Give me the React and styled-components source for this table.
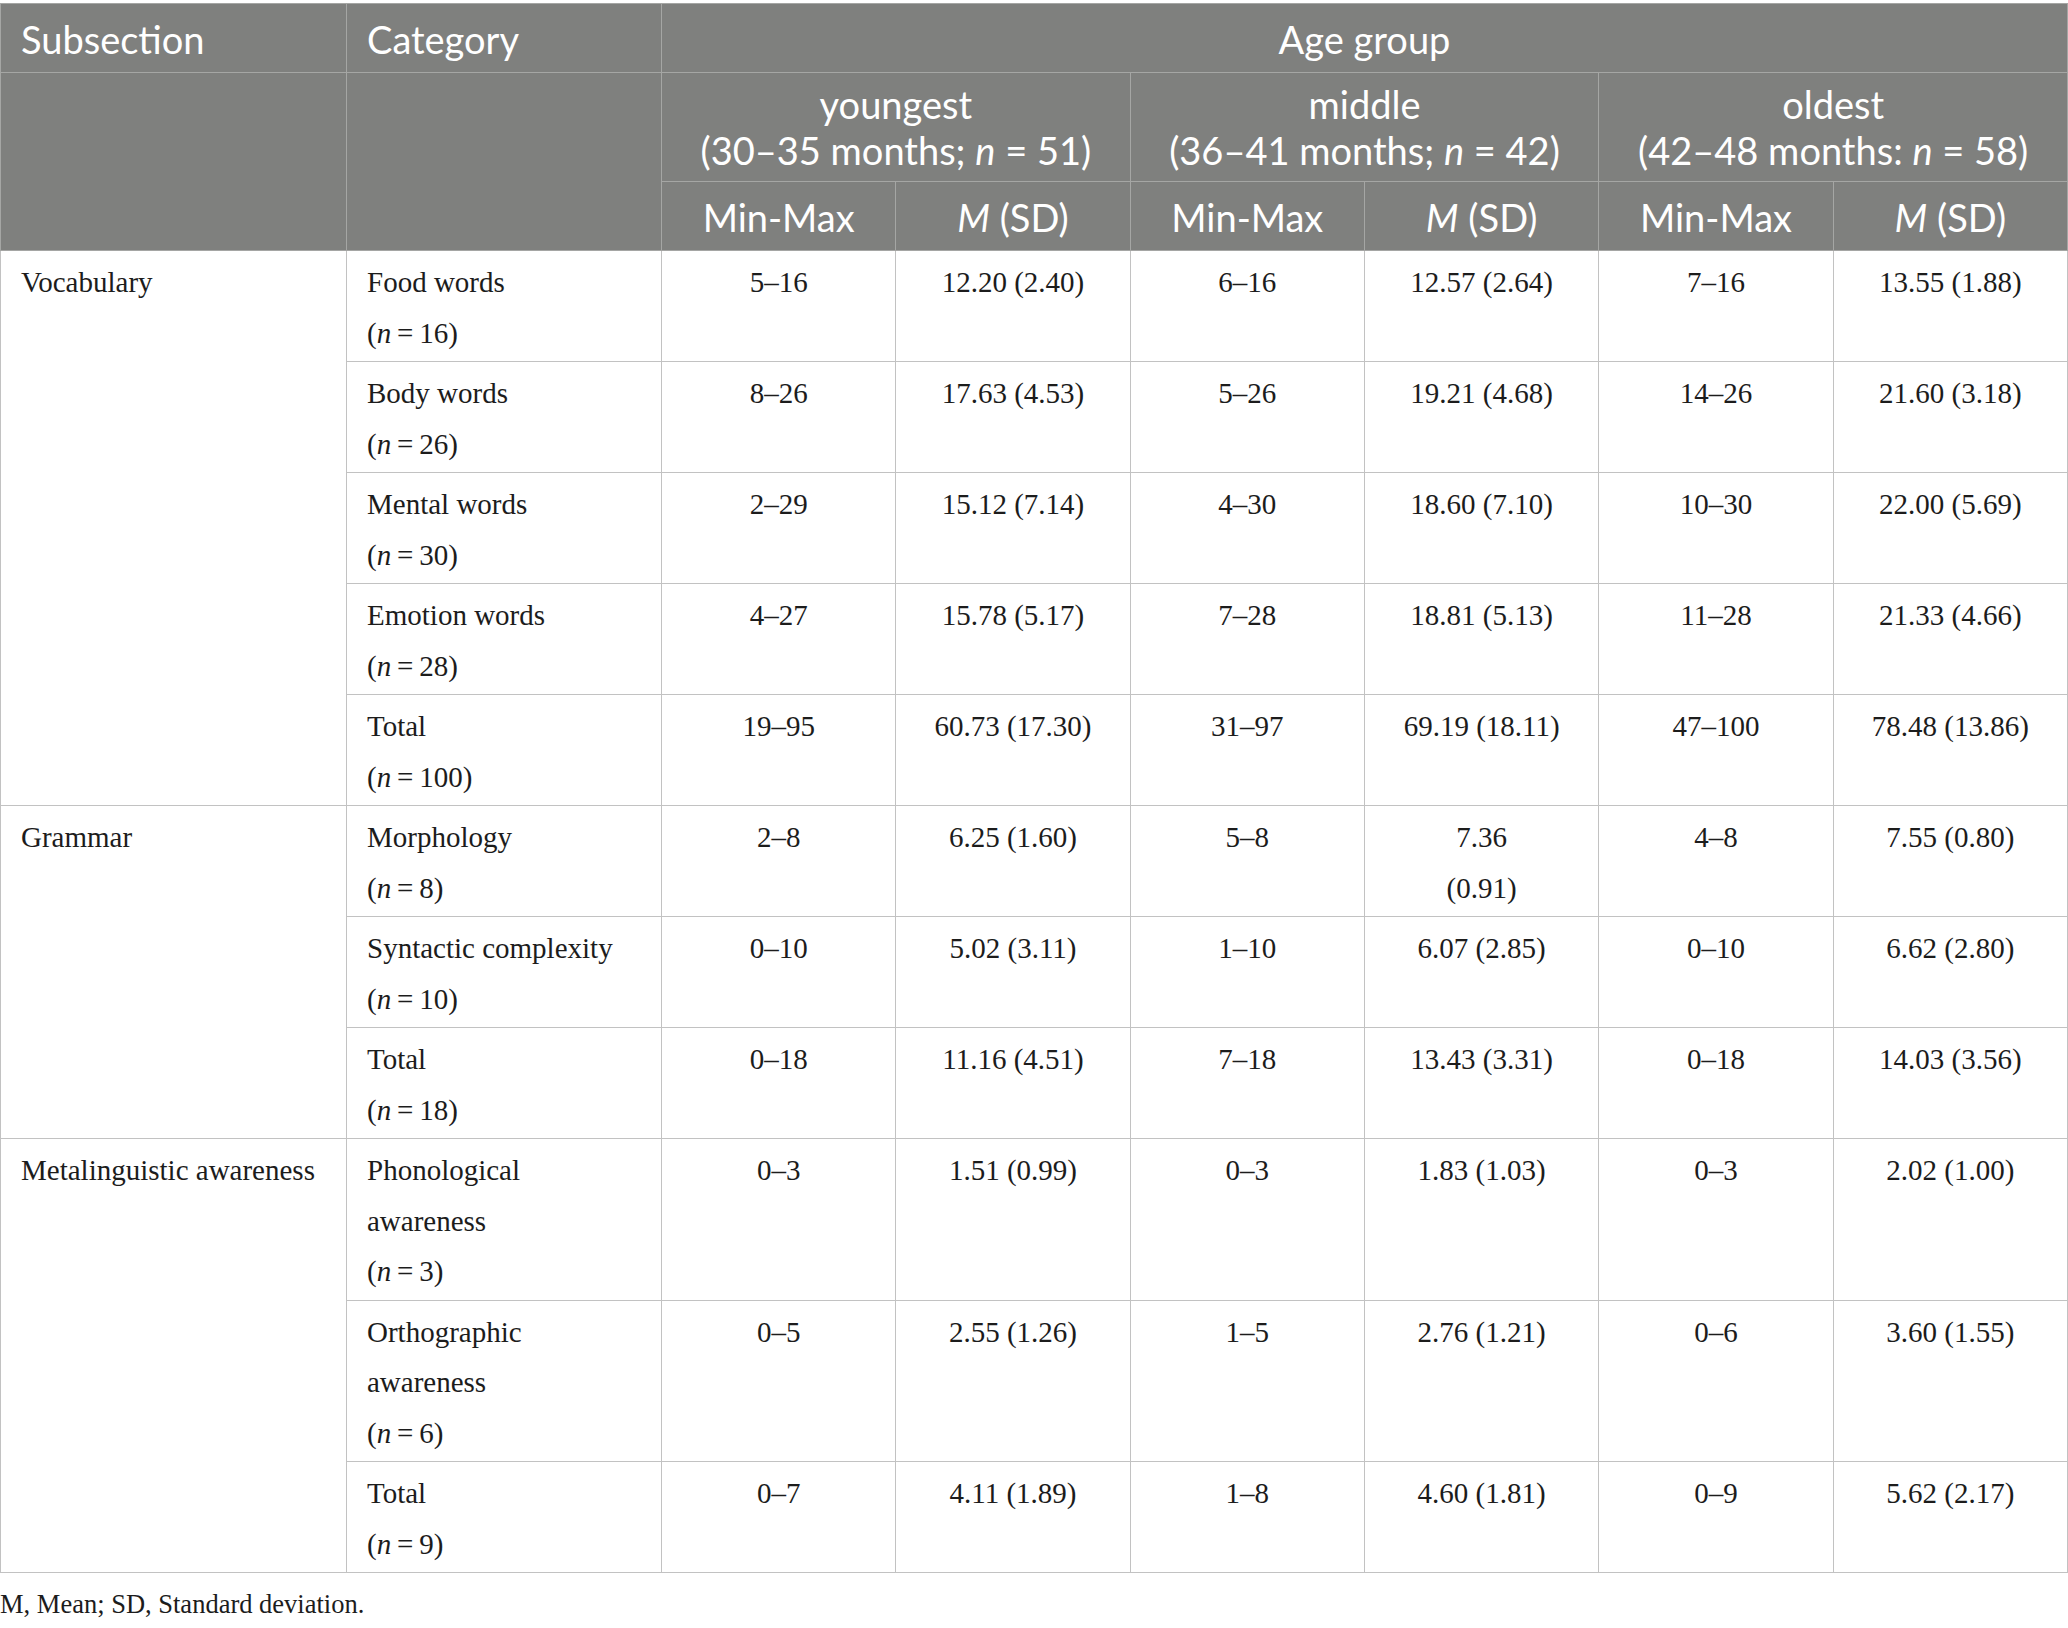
import React from 'react'
import styled, { createGlobalStyle } from 'styled-components';

const Global = createGlobalStyle`
body {
  margin: 0;
  background: #ffffff;
}
`

const Page = styled.div`
padding-top: 3px;
width: 2068px;
`

const Table = styled.table`
width: 2068px;
border-collapse: collapse;
table-layout: fixed;
border: 1px solid #c2c2c2;
`

const HeadCell = styled.th`
background: #7f807e;
color: #ffffff;
font-family: Lato, 'Noto Sans', sans-serif;
font-weight: 400;
font-size: 38px;
line-height: ${p => p.$tall ? '46px' : '51px'};
text-align: ${p => p.$left ? 'left' : 'center'};
vertical-align: top;
padding: ${p => p.$tall ? '8px 20px 8px' : '10px 20px 7px'};
border: 1px solid #a5a6a4;
`

const Cell = styled.td`
font-family: 'Liberation Serif', 'Times New Roman', serif;
font-size: 29px;
line-height: 50.5px;
color: #1c1c1c;
text-align: ${p => p.$left ? 'left' : 'center'};
vertical-align: top;
padding: 6px 20px 3px;
border: 1px solid #c2c2c2;
`

const Line = styled.div`
white-space: nowrap;
`

const Note = styled.p`
margin: 16px 0 0;
font-family: 'Liberation Serif', 'Times New Roman', serif;
font-size: 26.5px;
color: #1c1c1c;
`

const N = ({ v }) => <Line>(<i>n</i>{'\u2009=\u2009'}{v})</Line>

const sections = [
    { name: 'Vocabulary', rows: [
        { cat: ['Food words'], n: 16, vals: ['5–16', '12.20 (2.40)', '6–16', '12.57 (2.64)', '7–16', '13.55 (1.88)'] },
        { cat: ['Body words'], n: 26, vals: ['8–26', '17.63 (4.53)', '5–26', '19.21 (4.68)', '14–26', '21.60 (3.18)'] },
        { cat: ['Mental words'], n: 30, vals: ['2–29', '15.12 (7.14)', '4–30', '18.60 (7.10)', '10–30', '22.00 (5.69)'] },
        { cat: ['Emotion words'], n: 28, vals: ['4–27', '15.78 (5.17)', '7–28', '18.81 (5.13)', '11–28', '21.33 (4.66)'] },
        { cat: ['Total'], n: 100, vals: ['19–95', '60.73 (17.30)', '31–97', '69.19 (18.11)', '47–100', '78.48 (13.86)'] },
    ]},
    { name: 'Grammar', rows: [
        { cat: ['Morphology'], n: 8, vals: ['2–8', '6.25 (1.60)', '5–8', ['7.36', '(0.91)'], '4–8', '7.55 (0.80)'] },
        { cat: ['Syntactic complexity'], n: 10, vals: ['0–10', '5.02 (3.11)', '1–10', '6.07 (2.85)', '0–10', '6.62 (2.80)'] },
        { cat: ['Total'], n: 18, vals: ['0–18', '11.16 (4.51)', '7–18', '13.43 (3.31)', '0–18', '14.03 (3.56)'] },
    ]},
    { name: 'Metalinguistic awareness', rows: [
        { cat: ['Phonological', 'awareness'], n: 3, vals: ['0–3', '1.51 (0.99)', '0–3', '1.83 (1.03)', '0–3', '2.02 (1.00)'] },
        { cat: ['Orthographic', 'awareness'], n: 6, vals: ['0–5', '2.55 (1.26)', '1–5', '2.76 (1.21)', '0–6', '3.60 (1.55)'] },
        { cat: ['Total'], n: 9, vals: ['0–7', '4.11 (1.89)', '1–8', '4.60 (1.81)', '0–9', '5.62 (2.17)'] },
    ]},
]

const groups = [
    { name: 'youngest', range: '(30–35 months; ', n: 51 },
    { name: 'middle', range: '(36–41 months; ', n: 42 },
    { name: 'oldest', range: '(42–48 months: ', n: 58 },
]

function App() {
    return (
        <Page>
            <Global />
            <Table>
                <colgroup>
                    <col style={{ width: 346 }} />
                    <col style={{ width: 315 }} />
                    <col /><col /><col /><col /><col /><col />
                </colgroup>
                <thead>
                    <tr>
                        <HeadCell $left>Subsection</HeadCell>
                        <HeadCell $left>Category</HeadCell>
                        <HeadCell colSpan={6}>Age group</HeadCell>
                    </tr>
                    <tr>
                        <HeadCell rowSpan={2} />
                        <HeadCell rowSpan={2} />
                        {groups.map(g => (
                            <HeadCell key={g.name} colSpan={2} $tall>
                                <Line>{g.name}</Line>
                                <Line>{g.range}<i>n</i> = {g.n})</Line>
                            </HeadCell>
                        ))}
                    </tr>
                    <tr>
                        {groups.map(g => (
                            <React.Fragment key={g.name}>
                                <HeadCell>Min-Max</HeadCell>
                                <HeadCell><i>M</i> (SD)</HeadCell>
                            </React.Fragment>
                        ))}
                    </tr>
                </thead>
                <tbody>
                    {sections.map(sec => sec.rows.map((row, i) => (
                        <tr key={sec.name + i}>
                            {i === 0 && <Cell $left rowSpan={sec.rows.length}>{sec.name}</Cell>}
                            <Cell $left>
                                {row.cat.map(c => <Line key={c}>{c}</Line>)}
                                <N v={row.n} />
                            </Cell>
                            {row.vals.map((v, j) => (
                                <Cell key={j}>
                                    {Array.isArray(v) ? v.map(x => <Line key={x}>{x}</Line>) : v}
                                </Cell>
                            ))}
                        </tr>
                    )))}
                </tbody>
            </Table>
            <Note>M, Mean; SD, Standard deviation.</Note>
        </Page>
    )
}

export default App
